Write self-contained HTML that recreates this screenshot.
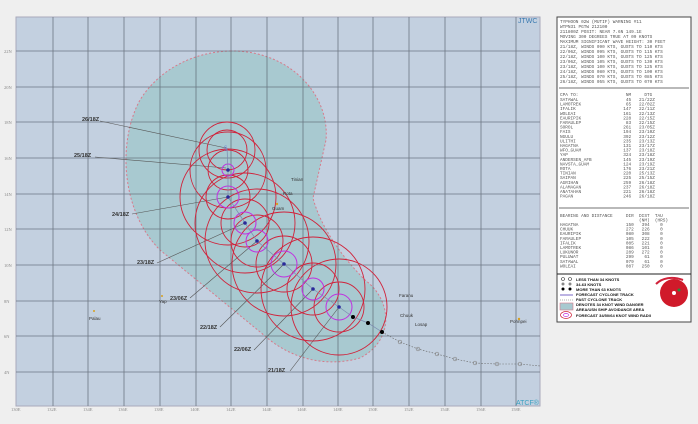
<!DOCTYPE html>
<html><head><meta charset="utf-8"><style>
body{margin:0;background:#efefef;width:698px;height:424px;overflow:hidden;font-family:"Liberation Sans",sans-serif}
.pre text{white-space:pre}
</style></head><body>
<svg width="698" height="424" viewBox="0 0 698 424" xmlns="http://www.w3.org/2000/svg" style="position:absolute;left:0;top:0">
<rect x="16" y="17" width="524" height="389" fill="#c3d0e0" stroke="#aab" stroke-width="1"/>
<path d="M230,51 C290,50 330,95 326,140 L313,198 C320,225 340,255 365,280 C392,300 395,340 360,358 C325,368 290,358 265,336 L160,250 C120,210 118,140 140,100 C160,68 195,52 230,51 Z" fill="#a8c9d0" stroke="#d87a8a" stroke-width="1" stroke-dasharray="2,2"/>
<g stroke="#5e6874" stroke-width="0.8" opacity="0.85">
<line x1="53" y1="17" x2="53" y2="406"/><line x1="88" y1="17" x2="88" y2="406"/><line x1="124" y1="17" x2="124" y2="406"/><line x1="160" y1="17" x2="160" y2="406"/><line x1="196" y1="17" x2="196" y2="406"/><line x1="231" y1="17" x2="231" y2="406"/><line x1="267" y1="17" x2="267" y2="406"/><line x1="303" y1="17" x2="303" y2="406"/><line x1="338" y1="17" x2="338" y2="406"/><line x1="373" y1="17" x2="373" y2="406"/><line x1="409" y1="17" x2="409" y2="406"/><line x1="445" y1="17" x2="445" y2="406"/><line x1="481" y1="17" x2="481" y2="406"/><line x1="516" y1="17" x2="516" y2="406"/>
<line x1="16" y1="51" x2="540" y2="51"/><line x1="16" y1="87" x2="540" y2="87"/><line x1="16" y1="122" x2="540" y2="122"/><line x1="16" y1="158" x2="540" y2="158"/><line x1="16" y1="194" x2="540" y2="194"/><line x1="16" y1="229" x2="540" y2="229"/><line x1="16" y1="265" x2="540" y2="265"/><line x1="16" y1="301" x2="540" y2="301"/><line x1="16" y1="336" x2="540" y2="336"/><line x1="16" y1="372" x2="540" y2="372"/>
</g>
<g font-family="Liberation Serif,serif" font-size="4.5" fill="#888">
<text x="4" y="53">22N</text><text x="4" y="89">20N</text><text x="4" y="124">18N</text><text x="4" y="160">16N</text><text x="4" y="196">14N</text><text x="4" y="231">12N</text><text x="4" y="267">10N</text><text x="4" y="303">8N</text><text x="4" y="338">6N</text><text x="4" y="374">4N</text>
<text x="11" y="411">130E</text><text x="47" y="411">132E</text><text x="83" y="411">134E</text><text x="118" y="411">136E</text><text x="154" y="411">138E</text><text x="190" y="411">140E</text><text x="226" y="411">142E</text><text x="262" y="411">144E</text><text x="297" y="411">146E</text><text x="333" y="411">148E</text><text x="368" y="411">150E</text><text x="404" y="411">152E</text><text x="440" y="411">154E</text><text x="476" y="411">156E</text><text x="511" y="411">158E</text>
</g>
<g stroke="#555" stroke-width="0.6" fill="none">
<line x1="100" y1="121" x2="226" y2="148"/><line x1="95" y1="157" x2="226" y2="168"/><line x1="132" y1="214" x2="228" y2="197"/><line x1="157" y1="263" x2="245" y2="223"/><line x1="190" y1="298" x2="257" y2="241"/><line x1="220" y1="327" x2="284" y2="264"/><line x1="254" y1="350" x2="313" y2="289"/><line x1="290" y1="371" x2="339" y2="307"/>
</g>
<g font-size="5.5" font-weight="bold" fill="#333">
<text x="82" y="121">26/18Z</text><text x="74" y="157">25/18Z</text><text x="112" y="216">24/18Z</text><text x="137" y="264">23/18Z</text><text x="170" y="300">23/06Z</text><text x="200" y="329">22/18Z</text><text x="234" y="351">22/06Z</text><text x="268" y="372">21/18Z</text>
</g>
<g fill="none" stroke="#d0223a" stroke-width="0.9">
<circle cx="227" cy="150" r="28"/><circle cx="227" cy="150" r="20"/>
<circle cx="228" cy="170" r="38"/><circle cx="228" cy="170" r="20"/>
<circle cx="228" cy="197" r="48"/><circle cx="228" cy="197" r="22"/>
<circle cx="245" cy="223" r="50"/><circle cx="245" cy="223" r="24"/>
<circle cx="257" cy="241" r="52"/><circle cx="257" cy="241" r="26"/>
<circle cx="284" cy="264" r="52"/><circle cx="284" cy="264" r="28"/>
<circle cx="313" cy="289" r="52"/><circle cx="313" cy="289" r="26"/>
<circle cx="339" cy="307" r="48"/><circle cx="339" cy="307" r="25"/>
</g>
<g fill="none" stroke="#c030e0" stroke-width="1">
<circle cx="228" cy="170" r="6"/><circle cx="228" cy="197" r="11"/><circle cx="245" cy="223" r="11"/><circle cx="257" cy="241" r="11"/><circle cx="284" cy="264" r="13"/><circle cx="313" cy="289" r="11"/><circle cx="339" cy="307" r="13"/>
</g>
<polyline points="227,148 228,170 228,197 245,223 257,241 284,264 313,289 339,307 353,317 368,323 382,332" fill="none" stroke="#7a8ab0" stroke-width="0.7"/>
<polyline points="382,332 400,342 418,349 437,354 455,359 475,363 497,364 520,364 540,366" fill="none" stroke="#666" stroke-width="0.6" stroke-dasharray="1.5,1.5"/>
<g fill="#2a2a9a"><circle cx="228" cy="170" r="1.8"/><circle cx="228" cy="197" r="1.8"/><circle cx="245" cy="223" r="1.8"/><circle cx="257" cy="241" r="1.8"/><circle cx="284" cy="264" r="1.8"/><circle cx="313" cy="289" r="1.8"/><circle cx="339" cy="307" r="1.8"/></g>
<text x="224" y="150" font-size="6" fill="#6a7ad0">§</text>
<g fill="#000"><circle cx="353" cy="317" r="2"/><circle cx="368" cy="323" r="2"/><circle cx="382" cy="332" r="2"/></g>
<g fill="none" stroke="#888" stroke-width="0.7"><circle cx="400" cy="342" r="1.8"/><circle cx="418" cy="349" r="1.8"/><circle cx="437" cy="354" r="1.8"/><circle cx="455" cy="359" r="1.8"/><circle cx="475" cy="363" r="1.8"/><circle cx="497" cy="364" r="1.8"/><circle cx="520" cy="364" r="1.8"/></g>
<g font-size="4.5" fill="#333">
<text x="89" y="320">Palau</text><text x="159" y="303">Yap</text><text x="272" y="210">Guam</text><text x="283" y="195">Rota</text><text x="291" y="181">Tinian</text><text x="399" y="297">Faranu</text><text x="400" y="317">Chuuk</text><text x="415" y="326">Losap</text><text x="510" y="323">Pohnpei</text>
</g>
<g fill="#d8a020"><circle cx="94" cy="311" r="1"/><circle cx="162" cy="296" r="1"/><circle cx="277" cy="204" r="1.2"/><circle cx="519" cy="319" r="1.2"/></g>
<text x="518" y="23" font-size="7" fill="#3a7ab0">JTWC</text>
<text x="516" y="405" font-size="7" fill="#3aa0c0">ATCF®</text>
<rect x="557" y="17" width="134" height="305" fill="#fff" stroke="#444" stroke-width="1"/>
<line x1="559" y1="88" x2="689" y2="88" stroke="#444" stroke-width="0.7"/>
<line x1="559" y1="208" x2="689" y2="208" stroke="#444" stroke-width="0.7"/>
<line x1="557" y1="274" x2="691" y2="274" stroke="#222" stroke-width="1"/>
<g class="pre" font-family="Liberation Mono,monospace" font-size="4.4" fill="#555">
<text x="560" y="23">TYPHOON 02W (MUTIF) WARNING #11</text>
<text x="560" y="28">WTPN31 PGTW 212100</text>
<text x="560" y="33">211800Z POSIT: NEAR 7.6N 149.1E</text>
<text x="560" y="38">MOVING 300 DEGREES TRUE AT 09 KNOTS</text>
<text x="560" y="43">MAXIMUM SIGNIFICANT WAVE HEIGHT: 30 FEET</text>
<text x="560" y="48">21/18Z, WINDS 090 KTS, GUSTS TO 110 KTS</text>
<text x="560" y="53">22/06Z, WINDS 095 KTS, GUSTS TO 115 KTS</text>
<text x="560" y="58">22/18Z, WINDS 100 KTS, GUSTS TO 125 KTS</text>
<text x="560" y="63">23/06Z, WINDS 105 KTS, GUSTS TO 130 KTS</text>
<text x="560" y="68">23/18Z, WINDS 100 KTS, GUSTS TO 125 KTS</text>
<text x="560" y="73">24/18Z, WINDS 080 KTS, GUSTS TO 100 KTS</text>
<text x="560" y="78">25/18Z, WINDS 070 KTS, GUSTS TO 085 KTS</text>
<text x="560" y="83">26/18Z, WINDS 055 KTS, GUSTS TO 070 KTS</text>
<text x="560" y="96">CPA TO:                  NM     DTG</text>
<text x="560" y="101">SATAWAL                  45   21/22Z</text>
<text x="560" y="105.6">LAMOTREK                 65   22/02Z</text>
<text x="560" y="110.2">IFALIK                  147   22/11Z</text>
<text x="560" y="114.8">WOLEAI                  161   22/13Z</text>
<text x="560" y="119.4">EAURIPIK                228   22/15Z</text>
<text x="560" y="124">FARAULEP                 83   22/15Z</text>
<text x="560" y="128.6">SOROL                   261   23/05Z</text>
<text x="560" y="133.2">FAIS                    194   23/10Z</text>
<text x="560" y="137.8">NGULU                   392   23/12Z</text>
<text x="560" y="142.4">ULITHI                  235   23/13Z</text>
<text x="560" y="147">HAGATNA                 131   23/17Z</text>
<text x="560" y="151.6">WFO_GUAM                137   23/18Z</text>
<text x="560" y="156.2">YAP                     324   23/18Z</text>
<text x="560" y="160.8">ANDERSEN_AFB            145   23/19Z</text>
<text x="560" y="165.4">NAVSTA_GUAM             124   23/19Z</text>
<text x="560" y="170">ROTA                    176   23/21Z</text>
<text x="560" y="174.6">TINIAN                  220   25/13Z</text>
<text x="560" y="179.2">SAIPAN                  225   25/15Z</text>
<text x="560" y="183.8">AGRIHAN                 259   26/18Z</text>
<text x="560" y="188.4">ALAMAGAN                237   26/18Z</text>
<text x="560" y="193">ANATAHAN                221   26/18Z</text>
<text x="560" y="197.6">PAGAN                   246   26/18Z</text>
<text x="560" y="217">BEARING AND DISTANCE     DIR  DIST  TAU</text>
<text x="560" y="221.5">                              (NM)  (HRS)</text>
<text x="560" y="226">HAGATNA                  150   394    0</text>
<text x="560" y="230.6">CHUUK                    272   226    0</text>
<text x="560" y="235.2">EAURIPIK                 080   308    0</text>
<text x="560" y="239.8">FARAULEP                 105   222    0</text>
<text x="560" y="244.4">IFALIK                   085   221    0</text>
<text x="560" y="249">LAMOTREK                 086   101    0</text>
<text x="560" y="253.6">LUKUNOR                  289   272    0</text>
<text x="560" y="258.2">PULUWAT                  299    61    0</text>
<text x="560" y="262.8">SATAWAL                  079    61    0</text>
<text x="560" y="267.4">WOLEAI                   087   250    0</text>
</g>
<g font-size="4" font-weight="bold" fill="#111">
<text x="576" y="281">LESS THAN 34 KNOTS</text>
<text x="576" y="286">34-63 KNOTS</text>
<text x="576" y="291">MORE THAN 63 KNOTS</text>
<text x="576" y="296">FORECAST CYCLONE TRACK</text>
<text x="576" y="301">PAST CYCLONE TRACK</text>
<text x="576" y="306">DENOTES 34 KNOT WIND DANGER</text>
<text x="576" y="311">AREA/USN SHIP AVOIDANCE AREA</text>
<text x="576" y="317">FORECAST 34/50/64 KNOT WIND RADII</text>
</g>
<g fill="none" stroke="#333" stroke-width="0.6"><circle cx="563" cy="279" r="1.5"/><circle cx="570" cy="279" r="1.5"/></g>
<circle cx="563" cy="284" r="1.5" fill="#888"/><circle cx="570" cy="284" r="1.5" fill="#888"/>
<circle cx="563" cy="289" r="1.5" fill="#000"/><circle cx="570" cy="289" r="1.5" fill="#000"/>
<line x1="560" y1="295" x2="573" y2="295" stroke="#9080d0" stroke-width="1.2"/>
<line x1="560" y1="300" x2="573" y2="300" stroke="#666" stroke-width="0.6" stroke-dasharray="1,1"/>
<rect x="560" y="303" width="13" height="7" fill="#a8c9d0" stroke="#d87a8a" stroke-width="0.6"/>
<ellipse cx="566" cy="315" rx="5.5" ry="3.5" fill="none" stroke="#d0223a" stroke-width="0.7"/>
<ellipse cx="566" cy="315" rx="2.5" ry="1.6" fill="none" stroke="#c030e0" stroke-width="0.7"/>
<path d="M683,280 C672,276 662,278 656,284" fill="none" stroke="#d0223a" stroke-width="2"/>
<circle cx="674" cy="293" r="14" fill="#d01a2a"/>
<circle cx="674" cy="293" r="2" fill="#fff"/>
<circle cx="679" cy="290" r="1.5" fill="#2a8a3a"/>
</svg>
</body></html>
